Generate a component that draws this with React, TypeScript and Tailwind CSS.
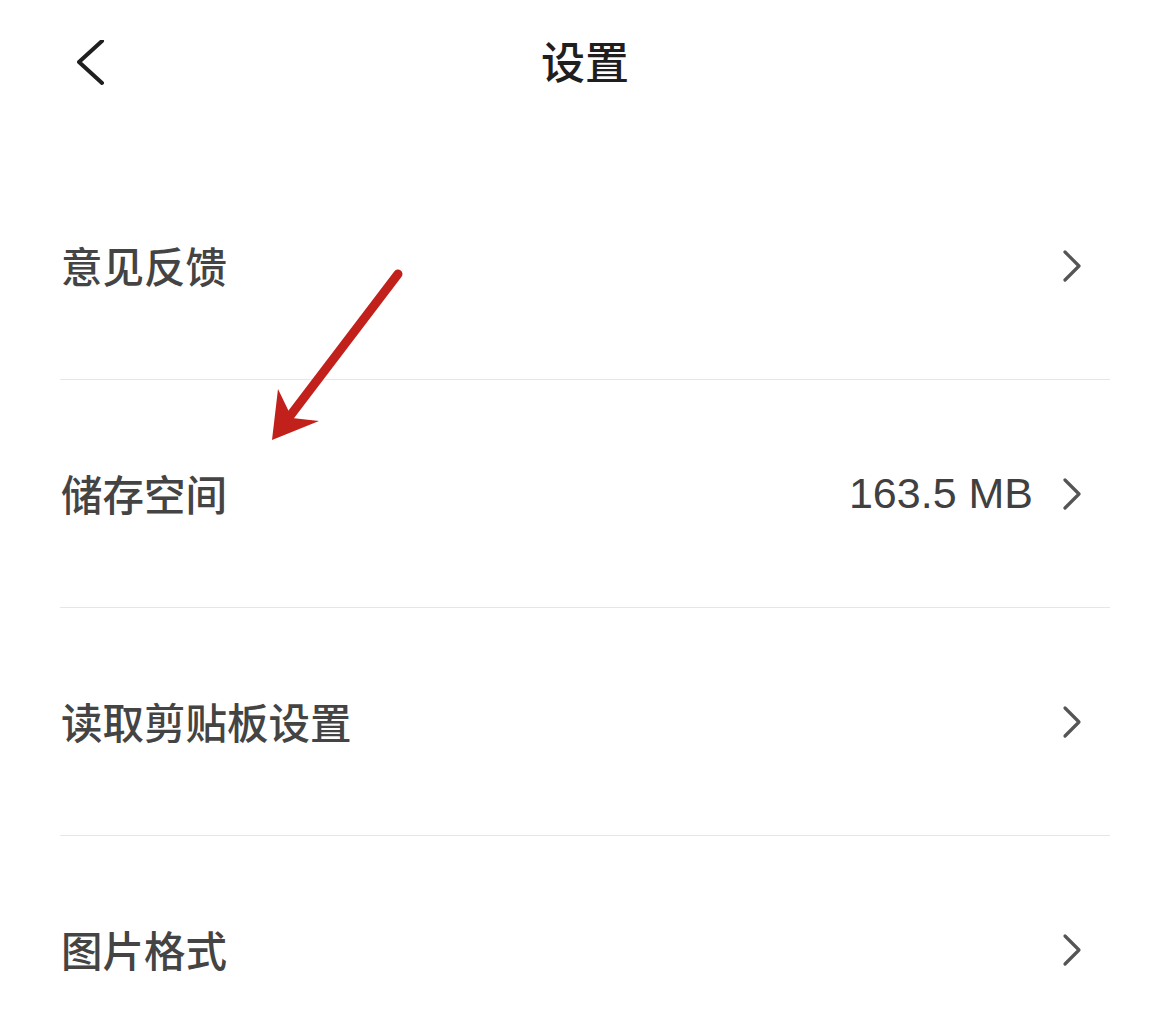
import React from "react";

const font = { fontFamily: '"Noto Sans CJK SC", "Noto Sans", sans-serif' };

function Chevron() {
  return (
    <svg width="24" height="36" viewBox="0 0 24 36" className="shrink-0">
      <path d="M5 4 L19 18 L5 32" fill="none" stroke="#555555" strokeWidth="3.2" strokeLinecap="round" strokeLinejoin="round" />
    </svg>
  );
}

function Row({ label, value, last }: { label: string; value?: string; last?: boolean }) {
  return (
    <div className={`flex h-[228px] items-center justify-between ${last ? "" : "border-b border-[#e6e6e6]"}`}>
      <span className="text-[41.5px] leading-none font-medium text-[#444444] pl-[1px]" style={font}>
        {label}
      </span>
      <div className="flex items-center gap-[27px] pr-[26px]">
        {value && (
          <span className="text-[43px] leading-none text-[#404040]" style={{ fontFamily: '"Liberation Sans", Arial, sans-serif' }}>
            {value}
          </span>
        )}
        <Chevron />
      </div>
    </div>
  );
}

export default function App() {
  return (
    <div className="relative w-[1170px] h-[1020px] overflow-hidden bg-white">
      <div className="grid h-[128px] grid-cols-[1fr_auto_1fr] items-center">
        <div className="pl-[77px] flex items-center">
          <svg width="30" height="48" viewBox="0 0 30 48">
            <path d="M25 1 L2 22 L25 43" fill="none" stroke="#1f1f1f" strokeWidth="4" strokeLinecap="round" strokeLinejoin="round" />
          </svg>
        </div>
        <h1 className="pb-[9px] text-[44px] leading-none font-medium text-[#1f1f1f]" style={font}>
          设置
        </h1>
        <div />
      </div>
      <div className="mt-[24px] mx-[60px]">
        <Row label="意见反馈" />
        <Row label="储存空间" value="163.5 MB" />
        <Row label="读取剪贴板设置" />
        <Row label="图片格式" last />
      </div>
      <svg className="absolute left-0 top-0 pointer-events-none" width="1170" height="1020" viewBox="0 0 1170 1020">
        <line x1="398" y1="274" x2="290" y2="416" stroke="#c2201b" strokeWidth="9" strokeLinecap="round" />
        <path d="M272 440 L278 389 L292 418 L319 421 Z" fill="#c2201b" />
      </svg>
    </div>
  );
}
